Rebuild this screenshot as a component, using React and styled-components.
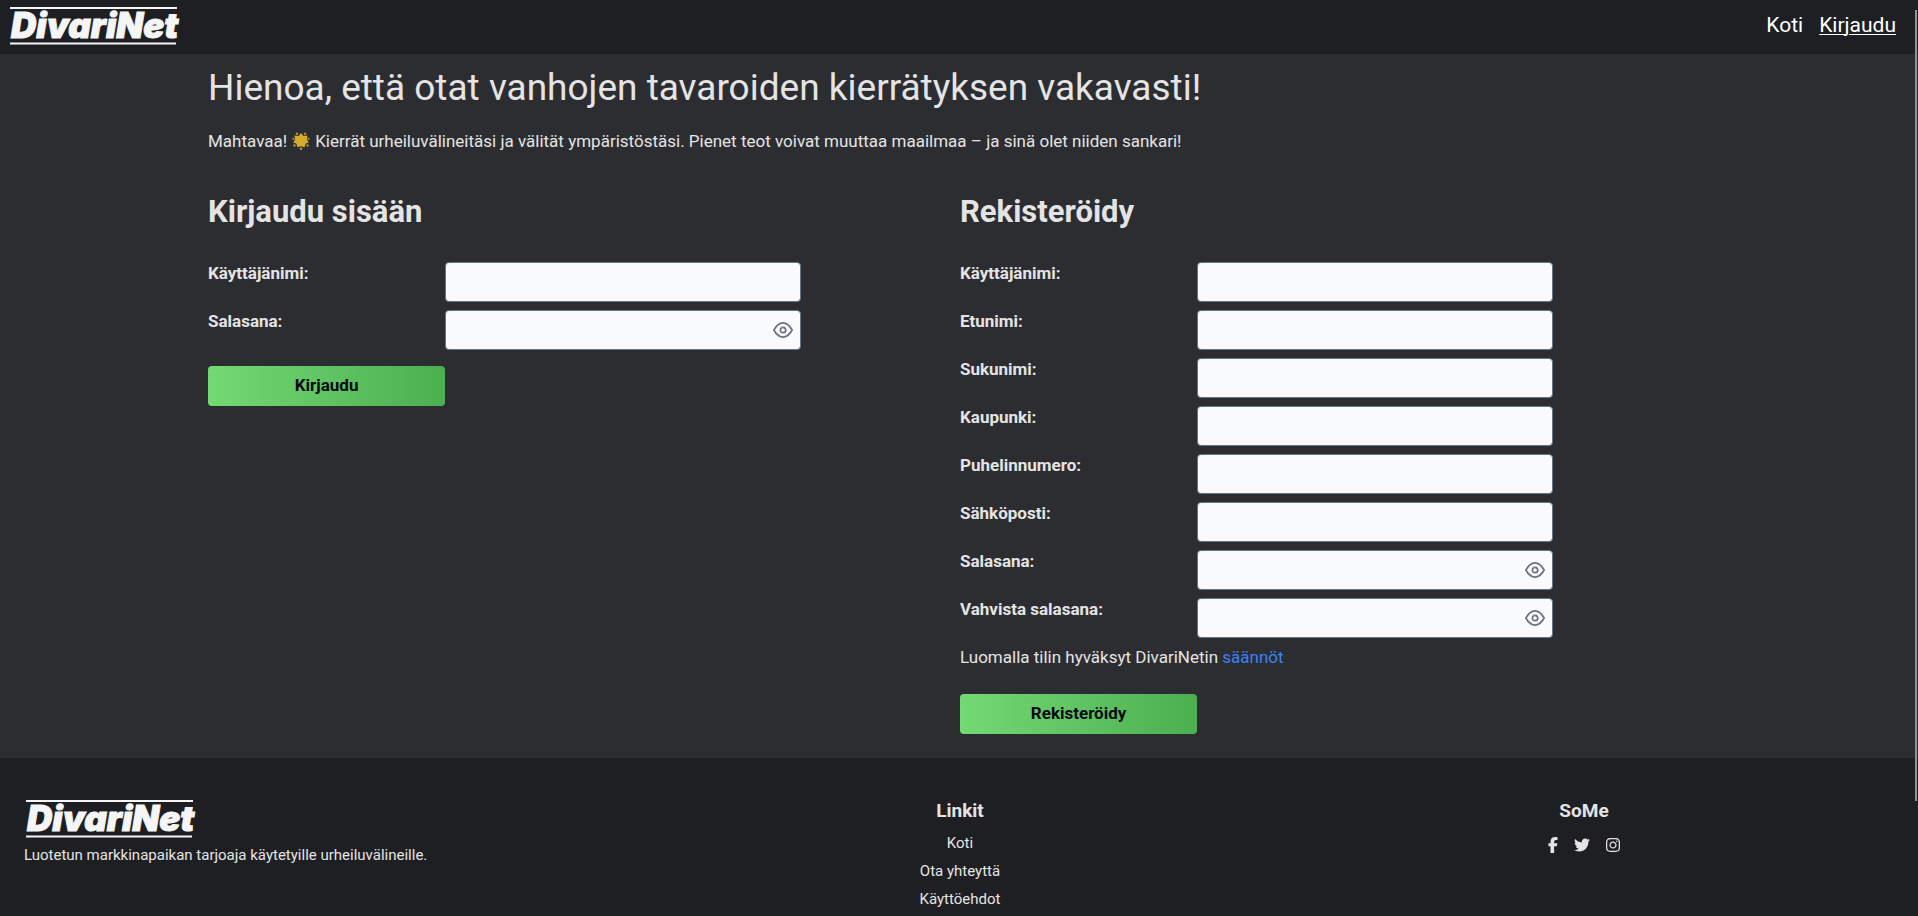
import React, { useState } from "react";
import styled, { createGlobalStyle } from "styled-components";
import { FaFacebookF, FaTwitter, FaInstagram } from "react-icons/fa6";

const GlobalStyle = createGlobalStyle`
  *, *::before, *::after { box-sizing: border-box; }
  html { scrollbar-width: none; }
  body {
    margin: 0;
    background: #1e1f23;
    color: #e4e4e4;
    font: 400 17px/22px Roboto, "Noto Sans", sans-serif;
  }
  h1, h2, h3, p, ul { margin: 0; padding: 0; }
`;

const Page = styled.div`
  display: flex;
  flex-direction: column;
  min-height: 100vh;
`;

const Header = styled.header`
  display: flex;
  justify-content: space-between;
  align-items: flex-start;
  height: 54px;
  padding: 0 22px 0 8px;
  background: #1e1f23;
`;

const LogoSvg = styled.svg`
  display: block;
  width: 176px;
  height: 50px;
`;

const Nav = styled.nav`
  display: flex;
  gap: 16px;
  padding-top: 12px;
`;

const NavLink = styled.a`
  color: #ffffff;
  font-size: 21px;
  line-height: 26px;
  text-decoration: ${(p) => (p.$active ? "underline" : "none")};
  text-decoration-thickness: 1px;
  text-underline-offset: 2px;
`;

const Main = styled.main`
  background: #2c2d31;
  padding: 8px 24px 24px;
`;

const Content = styled.div`
  max-width: 1502px;
  margin: 0 auto;
`;

const Title = styled.h1`
  font-size: 37px;
  line-height: 52px;
  font-weight: 400;
`;

const Intro = styled.p`
  display: flex;
  align-items: center;
  gap: 5px;
  margin-top: 16px;
`;

const StarSvg = styled.svg`
  width: 18px;
  height: 18px;
`;

const Columns = styled.div`
  display: grid;
  grid-template-columns: 1fr 1fr;
  column-gap: 2px;
  margin-top: 42px;
`;

const Form = styled.form`
  max-width: 593px;
`;

const FormTitle = styled.h2`
  margin-bottom: 32px;
  font-size: 31px;
  line-height: 36px;
  font-weight: 700;
`;

const Row = styled.div`
  display: grid;
  grid-template-columns: 2fr 3fr;
  margin-bottom: 8px;
`;

const Label = styled.label`
  font-weight: 700;
`;

const InputWrap = styled.div`
  position: relative;
`;

const Input = styled.input`
  display: block;
  width: 100%;
  height: 40px;
  padding: 0 ${(p) => (p.$withToggle ? "40px" : "12px")} 0 12px;
  border: 1px solid #64748b;
  border-radius: 4px;
  background: #f8fafc;
  color: #1e1f23;
  font: inherit;
`;

const Toggle = styled.button`
  position: absolute;
  top: 0;
  right: 8px;
  height: 40px;
  padding: 0;
  border: 0;
  background: none;
  color: #6b7280;
  cursor: pointer;
  display: flex;
  align-items: center;
`;

const Submit = styled.button`
  width: 40%;
  height: 40px;
  margin-top: ${(p) => p.$gap};
  padding: 0 0 2px;
  border: 0;
  border-radius: 4px;
  background: linear-gradient(to right, #73d973, #4caf50);
  color: #0a0a14;
  font: inherit;
  font-weight: 700;
  cursor: pointer;
`;

const RulesLink = styled.a`
  color: #3b82f6;
  text-decoration: none;
`;

const Footer = styled.footer`
  flex: 1;
  display: grid;
  grid-template-columns: repeat(3, 1fr);
  padding: 35px 22px 0 24px;
  background: #1e1f23;
  font-size: 15px;
`;

const FooterColumn = styled.div`
  display: flex;
  flex-direction: column;
  align-items: ${(p) => (p.$center ? "center" : "flex-start")};
`;

const FooterTitle = styled.h3`
  margin: 4px 0 8px;
  font-size: 19px;
  line-height: 28px;
  font-weight: 700;
`;

const Tagline = styled.p`
  line-height: 24px;
`;

const LinkList = styled.ul`
  list-style: none;
  text-align: center;
`;

const LinkItem = styled.li`
  line-height: 20px;
  margin-bottom: 8px;
  &:last-child { margin-bottom: 0; }
`;

const FooterLink = styled.a`
  color: inherit;
  text-decoration: none;
`;

const Socials = styled.div`
  display: flex;
  gap: 16px;
  padding-top: 4px;
`;

const SocialLink = styled.a`
  display: block;
  color: inherit;
  svg { display: block; width: ${(p) => p.$width}; height: 16px; }
`;

const ScrollThumb = styled.div`
  position: fixed;
  top: 10px;
  right: 1px;
  width: 2px;
  height: calc(100vh - 125px);
  background: #919194;
`;

const Logo = () => (
  <LogoSvg viewBox="0 0 176 50" role="img" aria-label="DivariNet">
    <path d="M2 8H169M2 43.500H168" stroke="#f5f5f5" strokeWidth="2" />
    <text x="3" y="38" fill="#f5f5f5" stroke="#f5f5f5" strokeWidth="1" fontFamily="Inter, sans-serif" fontSize="35" fontWeight="900" fontStyle="italic">
      DivariNet
    </text>
  </LogoSvg>
);

const Star = () => (
  <StarSvg viewBox="0 0 18 18" aria-hidden="true">
    <path d="M9 1l2.400 3 4.100-.5-.7 4.100 2 2.700-3.300 1.500-.8 3.500L9 14.200l-3.700 1.100-.8-3.500-3.300-1.500 2-2.700-.7-4.100 4.100.5z" fill="#d4ac2b" />
    <g fill="#b8962e">
      <circle cx="5" cy="1.800" r="1.200" /><circle cx="13" cy="1.800" r="1.200" />
      <circle cx="1.500" cy="6.800" r="1.100" /><circle cx="16.500" cy="6.800" r="1.100" />
      <circle cx="2.500" cy="13.500" r="1.200" /><circle cx="15.500" cy="13.500" r="1.200" />
      <circle cx="9" cy="16.700" r="1.300" />
    </g>
  </StarSvg>
);

const Eye = () => (
  <svg width="20" height="20" viewBox="0 0 20 20" fill="none" stroke="currentColor" strokeWidth="1.700" aria-hidden="true">
    <path d="M.9 10C3.500 5.200 6.600 2.900 10 2.900s6.500 2.300 9.100 7.100C16.500 14.800 13.400 17.100 10 17.100S3.500 14.800.9 10z" />
    <circle cx="10" cy="10" r="2.700" />
  </svg>
);

function Field({ id, label, type = "text" }) {
  const [visible, setVisible] = useState(false);
  const secret = type === "password";
  return (
    <Row>
      <Label htmlFor={id}>{label}</Label>
      <InputWrap>
        <Input id={id} type={secret && visible ? "text" : type} $withToggle={secret} />
        {secret && (
          <Toggle type="button" aria-label="Näytä salasana" onClick={() => setVisible(!visible)}>
            <Eye />
          </Toggle>
        )}
      </InputWrap>
    </Row>
  );
}

const loginFields = [
  { id: "login-user", label: "Käyttäjänimi:" },
  { id: "login-password", label: "Salasana:", type: "password" },
];

const registerFields = [
  { id: "user", label: "Käyttäjänimi:" },
  { id: "first-name", label: "Etunimi:" },
  { id: "last-name", label: "Sukunimi:" },
  { id: "city", label: "Kaupunki:" },
  { id: "phone", label: "Puhelinnumero:", type: "tel" },
  { id: "email", label: "Sähköposti:", type: "email" },
  { id: "password", label: "Salasana:", type: "password" },
  { id: "confirm", label: "Vahvista salasana:", type: "password" },
];

export default function App() {
  return (
    <Page>
      <GlobalStyle />
      <Header>
        <Logo />
        <Nav>
          <NavLink href="#koti">Koti</NavLink>
          <NavLink href="#kirjaudu" $active>Kirjaudu</NavLink>
        </Nav>
      </Header>
      <Main>
        <Content>
          <Title>Hienoa, että otat vanhojen tavaroiden kierrätyksen vakavasti!</Title>
          <Intro>
            <span>Mahtavaa!</span>
            <Star />
            <span>Kierrät urheiluvälineitäsi ja välität ympäristöstäsi. Pienet teot voivat muuttaa maailmaa – ja sinä olet niiden sankari!</span>
          </Intro>
          <Columns>
            <Form>
              <FormTitle>Kirjaudu sisään</FormTitle>
              {loginFields.map((f) => <Field key={f.id} {...f} />)}
              <Submit type="button" $gap="8px">Kirjaudu</Submit>
            </Form>
            <Form>
              <FormTitle>Rekisteröidy</FormTitle>
              {registerFields.map((f) => <Field key={f.id} {...f} />)}
              <p>Luomalla tilin hyväksyt DivariNetin <RulesLink href="#saannot">säännöt</RulesLink></p>
              <Submit type="button" $gap="26px">Rekisteröidy</Submit>
            </Form>
          </Columns>
        </Content>
      </Main>
      <Footer>
        <FooterColumn>
          <Logo />
          <Tagline>Luotetun markkinapaikan tarjoaja käytetyille urheiluvälineille.</Tagline>
        </FooterColumn>
        <FooterColumn $center>
          <FooterTitle>Linkit</FooterTitle>
          <LinkList>
            <LinkItem><FooterLink href="#koti">Koti</FooterLink></LinkItem>
            <LinkItem><FooterLink href="#yhteys">Ota yhteyttä</FooterLink></LinkItem>
            <LinkItem><FooterLink href="#ehdot">Käyttöehdot</FooterLink></LinkItem>
          </LinkList>
        </FooterColumn>
        <FooterColumn $center>
          <FooterTitle>SoMe</FooterTitle>
          <Socials>
            <SocialLink href="#facebook" aria-label="Facebook" $width="10px"><FaFacebookF /></SocialLink>
            <SocialLink href="#twitter" aria-label="Twitter" $width="16px"><FaTwitter /></SocialLink>
            <SocialLink href="#instagram" aria-label="Instagram" $width="14px"><FaInstagram /></SocialLink>
          </Socials>
        </FooterColumn>
      </Footer>
      <ScrollThumb />
    </Page>
  );
}
